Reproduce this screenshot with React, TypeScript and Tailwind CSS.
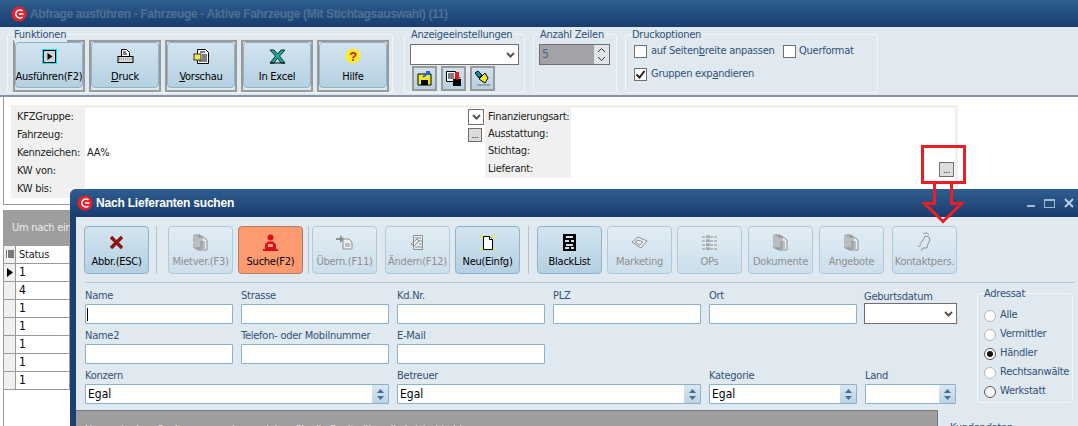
import React from 'react';

const font = { fontFamily: '"DejaVu Sans Condensed", "Liberation Sans", Arial, sans-serif' };
const boldFont = { fontFamily: '"Liberation Sans", Arial, sans-serif' };

const Logo: React.FC = () => (
  <svg width="16" height="16" viewBox="0 0 16 16" className="shrink-0">
    <circle cx="8" cy="8" r="7.5" fill="#e8202c" />
    <path d="M11.5 5 A4 4 0 1 0 11.5 11" stroke="#fff" strokeWidth="1.6" fill="none" />
    <path d="M8 8h4.5" stroke="#fff" strokeWidth="1.6" />
  </svg>
);

const PagesIcon: React.FC = () => (
  <svg width="16" height="17" viewBox="0 0 16 17">
    <path d="M1 1h6v13H1zM3 2h6v13H3zM5 3h5l4 3v10H5z" fill="#e6eef4" stroke="#8f8f8f" />
    <path d="M7 8h5M7 10h5M7 12h5M7 14h5" stroke="#8f8f8f" />
  </svg>
);

const toolIcons: Record<string, React.ReactNode> = {
  run: (
    <svg width="15" height="15" viewBox="0 0 15 15">
      <rect x="0" y="0" width="15" height="15" fill="#00e8f0" />
      <rect x="1.500" y="1.500" width="12" height="12" fill="#d4d4d4" stroke="#000" />
      <path d="M5.5 4v7l5-3.500z" fill="#000" />
    </svg>
  ),
  print: (
    <svg width="17" height="17" viewBox="0 0 17 17">
      <path d="M4.500 1.500h5l3 3v4h-8z" fill="#fff" stroke="#000" />
      <path d="M6 4h3M6 6h4" stroke="#000" />
      <rect x="1" y="8.500" width="15" height="6" fill="#d6d6d6" stroke="#000" />
      <path d="M2 11h13" stroke="#8a8a8a" strokeDasharray="1 1" />
    </svg>
  ),
  preview: (
    <svg width="17" height="17" viewBox="0 0 17 17">
      <path d="M4.500 1.500h8l3 3v11h-11z" fill="#fff" stroke="#000" />
      <path d="M7 4h5M9 7h5M9 9h5M9 11h5M6 13h8" stroke="#000" />
      <rect x="1" y="6" width="7" height="6" fill="#f5e84c" stroke="#333" />
    </svg>
  ),
  excel: (
    <svg width="17" height="15" viewBox="0 0 17 15">
      <path d="M1 1h4l3.500 4 3.500-4h4l-5.500 6 5.500 7h-4L8.500 9 5 14H1l5.500-7z" fill="#1ea49a" stroke="#03383a" />
      <path d="M1 14h15" stroke="#000" />
    </svg>
  ),
  help: (
    <svg width="16" height="16" viewBox="0 0 16 16">
      <circle cx="8" cy="8" r="7.500" fill="#f6ee2a" />
      <text x="8" y="12.500" textAnchor="middle" fontSize="13" fontWeight="700" fill="#d9102a" style={boldFont}>?</text>
    </svg>
  ),
  cancel: (
    <svg width="15" height="15" viewBox="0 0 15 15">
      <path d="M2 2l11 11M13 2L2 13" stroke="#8f1212" strokeWidth="3.400" />
    </svg>
  ),
  search: (
    <svg width="17" height="17" viewBox="0 0 17 17">
      <circle cx="8.500" cy="3.500" r="3" fill="#d9101a" />
      <path d="M3 16V10.500L6 7.500h5l3 3V16zM6 10v3h5v-3z" fill="#d9101a" />
      <path d="M1 16h15" stroke="#d9101a" strokeWidth="2" />
    </svg>
  ),
  transfer: (
    <svg width="17" height="16" viewBox="0 0 17 16">
      <path d="M0 4h4V1l4 4-4 4V6H0z" fill="#8f8f8f" />
      <path d="M7 5h6l3 3v7H7z" fill="#e6eef4" stroke="#8f8f8f" />
      <path d="M9 10h5M9 12h5" stroke="#8f8f8f" />
    </svg>
  ),
  edit: (
    <svg width="16" height="17" viewBox="0 0 16 17">
      <path d="M3.500 1.500h9v14h-9z" fill="#e6eef4" stroke="#8f8f8f" />
      <path d="M5 4h6M9 7h3M9 10h3M5 13h7M1 10l6-5 2 2-5 5z" stroke="#8f8f8f" fill="none" />
    </svg>
  ),
  newDoc: (
    <svg width="17" height="17" viewBox="0 0 17 17">
      <path d="M1 1l3 3M16 1l-3 3M1 16l3-3M16 16l-3-3" stroke="#f4e81c" strokeWidth="1.500" />
      <path d="M4.500 2.500h6l3 3v10h-9z" fill="#fff" stroke="#000" />
      <path d="M10.500 2.500v3h3" fill="#fff" stroke="#000" />
    </svg>
  ),
  blacklist: (
    <svg width="13" height="17" viewBox="0 0 13 17">
      <rect width="13" height="17" fill="#000" />
      <path d="M3 2h7v2H3zM2 6h4v2H2zM8 6h3v2H8zM3 10h7v2H3zM2 13h4v2H2zM8 13h3v2H8z" fill="#cfe0ea" />
    </svg>
  ),
  marketing: (
    <svg width="17" height="13" viewBox="0 0 17 13">
      <path d="M1 6l6-5 9 4-6 7z" fill="#e6eef4" stroke="#8f8f8f" />
      <path d="M4 6l3-2 5 2-3 3z" stroke="#8f8f8f" fill="none" />
    </svg>
  ),
  ops: (
    <svg width="17" height="15" viewBox="0 0 17 15">
      <path d="M1 2h15M1 6h15M1 10h15M1 14h15M6 0v15M8 0v15" stroke="#8f8f8f" strokeDasharray="3 1" />
    </svg>
  ),
  pages: <PagesIcon />,
  contact: (
    <svg width="16" height="20" viewBox="0 0 16 20">
      <path d="M6 2c2-2 5-1 6 1M8 4l4 1 1 3-2 4-1 4H6l-2 3M3 12l3-4 2-4M1 15l3-2" stroke="#8f8f8f" fill="none" />
    </svg>
  ),
};

const ToolButton: React.FC<{
  label: React.ReactNode;
  icon: string;
  disabled?: boolean;
  active?: boolean;
  framed?: boolean;
  className?: string;
}> = ({ label, icon, disabled, active, framed, className = '' }) => {
  let tone = 'border-[#8fb3cc] bg-gradient-to-b from-[#d3e4ef] to-[#b5d0e1] text-black';
  if (disabled) tone = 'border-[#aecbdd] bg-gradient-to-b from-[#e2edf4] to-[#cbdfeb] text-[#8f8f8f]';
  if (active) tone = 'border-[#b07c68] bg-[#fd9a70] text-black';
  const size = framed ? 'h-[46px] w-[68px] pt-[3px] pb-[3px]' : 'h-[48px] w-[65px] pt-[5px] pb-[4px]';
  return (
    <div className={`shrink-0 ${framed ? 'border-[2px] border-[#9a9a9a]' : ''} ${className}`}>
      <div className={`flex flex-col items-center justify-between rounded-[4px] border text-[11px] leading-[14px] ${size} ${tone}`}>
        <span className="flex h-[20px] items-center">{toolIcons[icon]}</span>
        <span className="whitespace-nowrap">{label}</span>
      </div>
    </div>
  );
};

const Legend: React.FC<{ title: string; className: string; children: React.ReactNode }> = ({ title, className, children }) => (
  <div className={`relative rounded-[3px] border border-[#f4f7fa] ${className}`}>
    <span className="absolute top-[-7px] left-[6px] bg-[#e0e8f0] pr-[1px] text-[11px] leading-[14px] whitespace-nowrap text-[#2f5277]">{title}</span>
    {children}
  </div>
);

const Checkbox: React.FC<{ checked?: boolean }> = ({ checked }) => (
  <span className="flex h-[13px] w-[13px] shrink-0 items-center justify-center border border-[#707070] bg-white">
    {checked && (
      <svg width="11" height="11" viewBox="0 0 11 11">
        <path d="M1.500 5.500l3 3 5-6.500" stroke="#222" strokeWidth="2" fill="none" />
      </svg>
    )}
  </span>
);

const SmallIcon: React.FC<{ children: React.ReactNode }> = ({ children }) => (
  <div className="flex h-[25px] w-[25px] items-center justify-center border-[2px] border-[#9a9a9a] bg-gradient-to-b from-[#cfe1ed] to-[#b5d0e1]">
    {children}
  </div>
);

const Chevron: React.FC = () => (
  <svg width="9" height="6" viewBox="0 0 9 6">
    <path d="M1 1l3.500 3.500L8 1" stroke="#555" strokeWidth="2" fill="none" />
  </svg>
);

const Spin: React.FC = () => (
  <svg width="7" height="11" viewBox="0 0 7 11">
    <path d="M3.500 0L7 4H0zM3.500 11L0 7h7z" fill="#43709a" />
  </svg>
);

const TextField: React.FC<{ label: string; cursor?: boolean }> = ({ label, cursor }) => (
  <div className="w-[148px] shrink-0">
    <div className="h-[15px] text-[11px] leading-[17px] whitespace-nowrap text-[#2f5277]">{label}</div>
    <div className="mt-[2px] flex h-[20px] items-center rounded-[1px] border border-[#88b2cd] bg-white pl-[1px]">
      {cursor && <span className="h-[13px] w-px bg-black" />}
    </div>
  </div>
);

const Combo: React.FC<{ label: string; width: number; value?: string }> = ({ label, width, value }) => (
  <div style={{ width }} className="shrink-0">
    <div className="h-[15px] text-[11px] leading-[17px] text-[#2f5277]">{label}</div>
    <div className="mt-[2px] flex h-[20px] items-center rounded-[1px] border border-[#88b2cd] bg-white">
      <span className="flex-1 pl-[2px] text-[12px] leading-[14px] tracking-[0px] text-black">{value}</span>
      <span className="flex h-full w-[16px] items-center justify-center bg-gradient-to-b from-[#dce8f0] to-[#bcd2e1]">
        <Spin />
      </span>
    </div>
  </div>
);

const FormRow: React.FC<{ label: string; value?: string }> = ({ label, value }) => (
  <div className="flex h-[18px] items-center text-[11px]">
    <span className="w-[74px] shrink-0 bg-[#f0f0f0] pl-[6px] leading-[18px] whitespace-nowrap text-[#222]">{label}</span>
    <span className="pl-[2px] text-[#222]">{value}</span>
  </div>
);

const GridRow: React.FC<{ value: string; current?: boolean }> = ({ value, current }) => (
  <div className="flex h-[18px] w-[66px] border-r border-b border-[#9a9a9a] text-[12px] leading-[17px] text-black">
    <span className="flex w-[12px] items-center justify-center border-r border-[#9a9a9a] bg-[#f0f0f0]">
      {current && (
        <svg width="6" height="9" viewBox="0 0 6 9">
          <path d="M0 0l6 4.500L0 9z" fill="#000" />
        </svg>
      )}
    </span>
    <span className="pl-[3px]">{value}</span>
  </div>
);

const Radio: React.FC<{ label: string; checked?: boolean; dark?: boolean }> = ({ label, checked, dark }) => (
  <div className="flex h-[19px] items-center gap-[4px] text-[11px] whitespace-nowrap text-[#2f5277]">
    <span className={`flex h-[12px] w-[12px] shrink-0 items-center justify-center rounded-full border bg-white ${dark || checked ? 'border-[#555]' : 'border-[#b5b5b5]'}`}>
      {checked && <span className="h-[6px] w-[6px] rounded-full bg-[#111]" />}
    </span>
    {label}
  </div>
);

const Divider: React.FC<{ className: string }> = ({ className }) => (
  <div className={`h-[48px] w-px shrink-0 bg-[#b4c4d2] ${className}`} />
);

const App: React.FC = () => (
  <div style={font} className="relative h-[426px] w-[1078px] overflow-hidden bg-white tracking-[-0.25px]">
    <div className="flex h-[27px] items-center gap-[3px] bg-gradient-to-b from-[#2f5f8f] to-[#193c6e] pl-[11px]">
      <Logo />
      <span style={boldFont} className="text-[12px] leading-[14px] font-bold tracking-[-0.35px] text-[#4d7194]">
        Abfrage ausführen - Fahrzeuge - Aktive Fahrzeuge (Mit Stichtagsauswahl) (11)
      </span>
    </div>

    <div className="flex h-[70px] items-start border-b-[2px] border-[#8793a5] bg-[#e0e8f0] pt-[7px] pl-[7px]">
      <Legend title="Funktionen" className="flex h-[59px] w-[386px] gap-[4px] pt-[5px] pl-[5px]">
        <ToolButton framed icon="run" label="Ausführen(F2)" />
        <ToolButton framed icon="print" label={<><u>D</u>ruck</>} />
        <ToolButton framed icon="preview" label={<><u>V</u>orschau</>} />
        <ToolButton framed icon="excel" label="In Excel" />
        <ToolButton framed icon="help" label="Hilfe" />
      </Legend>
      <Legend title="Anzeigeeinstellungen" className="ml-[11px] h-[59px] w-[121px] pt-[9px] pl-[5px]">
        <div className="flex h-[21px] w-[109px] items-center justify-end border border-[#707070] bg-white pr-[3px]">
          <Chevron />
        </div>
        <div className="mt-[1px] flex gap-[4px] pl-[2px]">
          <SmallIcon>
            <svg width="15" height="15" viewBox="0 0 15 15">
              <path d="M1 3h13v11H1z" fill="#f2e62c" stroke="#000" />
              <path d="M4 9h7v5H4z" fill="#000" />
              <path d="M6 6l6-5M9 1h3v3" stroke="#2a62d8" strokeWidth="2" fill="none" />
            </svg>
          </SmallIcon>
          <SmallIcon>
            <svg width="17" height="17" viewBox="0 0 17 17">
              <path d="M1.500 1.500h9v10h-9z" fill="#fff" stroke="#000" />
              <path d="M3 4h6M3 6h6M3 8h6" stroke="#000" />
              <path d="M8 9h8v7H8z" fill="#000" />
              <path d="M10 2h4v5h2l-4 3-3-3h1z" fill="#e01818" />
            </svg>
          </SmallIcon>
          <SmallIcon>
            <svg width="17" height="17" viewBox="0 0 17 17">
              <path d="M1 3l3-2 4 4-3 3z" fill="#0e8fb0" stroke="#000" />
              <path d="M5 9l6-6 3 5-3 5z" fill="#f2e62c" stroke="#000" />
              <path d="M3 15h10" stroke="#777" />
              <path d="M13 15h3" stroke="#d33" />
            </svg>
          </SmallIcon>
        </div>
      </Legend>
      <Legend title="Anzahl Zeilen" className="ml-[8px] h-[59px] w-[84px] pt-[9px] pl-[5px]">
        <div className="flex h-[21px] w-[71px] border border-[#6e6e6e] bg-[#e6e6e6]">
          <span className="flex-1 bg-[#a3a3a7] pl-[2px] text-[12px] leading-[19px] text-[#4a6485]">5</span>
          <span className="flex w-[15px] flex-col items-center justify-around bg-[#dfe4e8] text-[#333]">
            <svg width="7" height="4" viewBox="0 0 7 4"><path d="M0 4l3.500-3.500L7 4" stroke="#333" fill="none" /></svg>
            <svg width="7" height="4" viewBox="0 0 7 4"><path d="M0 0l3.500 3.500L7 0" stroke="#333" fill="none" /></svg>
          </span>
        </div>
      </Legend>
      <Legend title="Druckoptionen" className="ml-[8px] h-[59px] w-[253px] pt-[6px] pl-[8px] text-[11px] text-[#2f5277]">
        <div className="flex h-[20px] items-center">
          <Checkbox />
          <span className="ml-[4px] w-[122px] leading-[14px] whitespace-nowrap">auf Seiten<u>b</u>reite anpassen</span>
          <span className="ml-[10px]"><Checkbox /></span>
          <span className="ml-[3px] leading-[14px]">Querformat</span>
        </div>
        <div className="mt-[3px] flex h-[20px] items-center">
          <Checkbox checked />
          <span className="ml-[4px] leading-[14px]">Gruppen exp<u>a</u>ndieren</span>
        </div>
      </Legend>
    </div>

    <div className="ml-[3px] h-[108px] border-b border-l border-[#9a9a9a] pt-[8px] pl-[7px]">
      <div className="relative h-[93px] w-[947px] border-t-[3px] border-r-[3px] border-[#f0f0f0]">
        <FormRow label="KFZGruppe:" />
        <FormRow label="Fahrzeug:" />
        <FormRow label="Kennzeichen:" value="AA%" />
        <FormRow label="KW von:" />
        <FormRow label="KW bis:" />
        <div className="absolute top-0 left-[457px] flex">
          <div className="flex w-[17px] flex-col gap-[3px] pt-[1px]">
            <span className="flex h-[16px] w-[16px] items-center justify-center border border-[#707070] bg-white"><Chevron /></span>
            <span className="flex h-[14px] w-[14px] items-center justify-center border border-[#707070] bg-[#dcdcdc] text-[9px] leading-[6px]">...</span>
          </div>
          <div className="h-[70px] w-[86px] bg-[#f0f0f0] pl-[3px] text-[11px] text-[#222]">
            <div className="leading-[18px]">Finanzierungsart:</div>
            <div className="leading-[16px]">Ausstattung:</div>
            <div className="leading-[17px]">Stichtag:</div>
            <div className="leading-[19px]">Lieferant:</div>
          </div>
        </div>
      </div>
    </div>

    <div className="mt-[5px] ml-[3px] flex h-[36px] items-center bg-[#9e9e9e] pl-[9px] text-[11px] text-[#ececec]">Um nach einer</div>
    <div className="ml-[3px] h-[181px] border-l border-[#9a9a9a]">
      <div className="flex h-[18px] w-[66px] border-r border-b border-[#9a9a9a] text-[11px] leading-[17px] text-[#222]">
        <span className="flex w-[12px] items-center justify-center border-r border-[#9a9a9a] bg-[#f0f0f0]">
          <svg width="8" height="9" viewBox="0 0 8 9">
            <path d="M0 1h1M2 1h6M0 3h1M2 3h6M0 5h1M2 5h6M0 7h1M2 7h6" stroke="#000" />
          </svg>
        </span>
        <span className="pl-[3px]">Status</span>
      </div>
      <GridRow value="1" current />
      <GridRow value="4" />
      <GridRow value="1" />
      <GridRow value="1" />
      <GridRow value="1" />
      <GridRow value="1" />
      <GridRow value="1" />
    </div>

    <div className="absolute top-[189px] left-[70px] h-[237px] w-[1008px] overflow-hidden rounded-tl-[6px] bg-[#1b3f70] pl-[6px]">
      <div className="-ml-[6px] flex h-[28px] items-center gap-[3px] rounded-tl-[6px] bg-gradient-to-b from-[#2f5f8f] to-[#193c6e] pl-[7px]">
        <Logo />
        <span style={boldFont} className="text-[12px] leading-[14px] font-bold tracking-[-0.2px] text-white">Nach Lieferanten suchen</span>
        <div className="ml-auto flex items-center gap-[9px] pr-[4px]">
          <span className="mt-[6px] h-[2px] w-[8px] bg-[#9fb9d2]" />
          <span className="h-[9px] w-[11px] border border-t-[2px] border-[#9fb9d2]" />
          <svg width="10" height="10" viewBox="0 0 10 10"><path d="M1 1l8 8M9 1L1 9" stroke="#b8cde0" strokeWidth="2" /></svg>
        </div>
      </div>
      <div className="h-[209px] bg-[#e0e8f0]">
        <div className="flex h-[65px] items-start pt-[9px] pl-[8px]">
          <ToolButton icon="cancel" label="Abbr.(ESC)" />
          <Divider className="ml-[7px]" />
          <ToolButton disabled icon="pages" label="Mietver.(F3)" className="ml-[11px]" />
          <ToolButton active icon="search" label="Suche(F2)" className="ml-[5px]" />
          <Divider className="ml-[5px]" />
          <ToolButton disabled icon="transfer" label="Übern.(F11)" className="ml-[3px]" />
          <ToolButton disabled icon="edit" label="Ändern(F12)" className="ml-[8px]" />
          <ToolButton icon="newDoc" label="Neu(Einfg)" className="ml-[5px]" />
          <Divider className="ml-[8px]" />
          <ToolButton icon="blacklist" label="BlackList" className="ml-[8px]" />
          <ToolButton disabled icon="marketing" label="Marketing" className="ml-[5px]" />
          <ToolButton disabled icon="ops" label="OPs" className="ml-[5px]" />
          <ToolButton disabled icon="pages" label="Dokumente" className="ml-[6px]" />
          <ToolButton disabled icon="pages" label="Angebote" className="ml-[6px]" />
          <ToolButton disabled icon="contact" label="Kontaktpers." className="ml-[8px]" />
        </div>
        <div className="mr-[4px] ml-[9px] h-px bg-[#b4c4d2]" />

        <div className="flex pt-[4px] pl-[9px]">
          <div className="w-[892px] shrink-0">
            <div className="flex gap-[8px]">
              <TextField label="Name" cursor />
              <TextField label="Strasse" />
              <TextField label="Kd.Nr." />
              <TextField label="PLZ" />
              <TextField label="Ort" />
              <div className="ml-[-1px] w-[93px]">
                <div className="h-[15px] text-[11px] leading-[19px] text-[#2f5277]">Geburtsdatum</div>
                <div className="mt-[1px] flex h-[21px] items-center justify-end border border-[#707070] bg-white pr-[3px]"><Chevron /></div>
              </div>
            </div>
            <div className="mt-[3px] flex gap-[8px]">
              <TextField label="Name2" />
              <TextField label="Telefon- oder Mobilnummer" />
              <TextField label="E-Mail" />
            </div>
            <div className="mt-[3px] flex gap-[8px]">
              <Combo label="Konzern" width={304} value="Egal" />
              <Combo label="Betreuer" width={304} value="Egal" />
              <Combo label="Kategorie" width={148} value="Egal" />
              <Combo label="Land" width={91} />
            </div>
            <div className="mt-[6px] -ml-[9px] flex">
              <div className="h-[20px] w-[862px] shrink-0 border-t border-r border-[#777] bg-[#9e9e9e] pt-[12px] pl-[9px] text-[11px] leading-[14px] whitespace-nowrap text-[#ececec]">
                Um nach einer Spalte zu gruppieren, ziehen Sie die Spalte über die Leiste hierhin.
              </div>
              <div className="ml-[12px] pt-[11px] text-[11px] leading-[14px] whitespace-nowrap text-[#2f5277]">Kundendaten</div>
            </div>
          </div>
          <Legend title="Adressat" className="mt-[6px] h-[110px] w-[96px] shrink-0 pt-[12px] pl-[6px]">
            <Radio label="Alle" />
            <Radio label="Vermittler" />
            <Radio label="Händler" checked />
            <Radio label="Rechtsanwälte" />
            <Radio label="Werkstatt" dark />
          </Legend>
        </div>
      </div>
    </div>

    <div className="absolute top-[145px] left-[921px] h-[39px] w-[45px] border-[3px] border-[#ee1c25]" />
    <span className="absolute top-[162px] left-[939px] flex h-[15px] w-[15px] items-center justify-center border border-[#707070] bg-[#dcdcdc] text-[9px] leading-[6px] text-black">...</span>
    <svg className="absolute top-[183px] left-[922px]" width="42" height="42" viewBox="0 0 42 42">
      <path d="M12.500 0v20.500H2.500L21 38.500 39.500 20.500H29.500V0" stroke="#ee1c25" strokeWidth="3" fill="none" />
    </svg>
  </div>
);

export default App;
